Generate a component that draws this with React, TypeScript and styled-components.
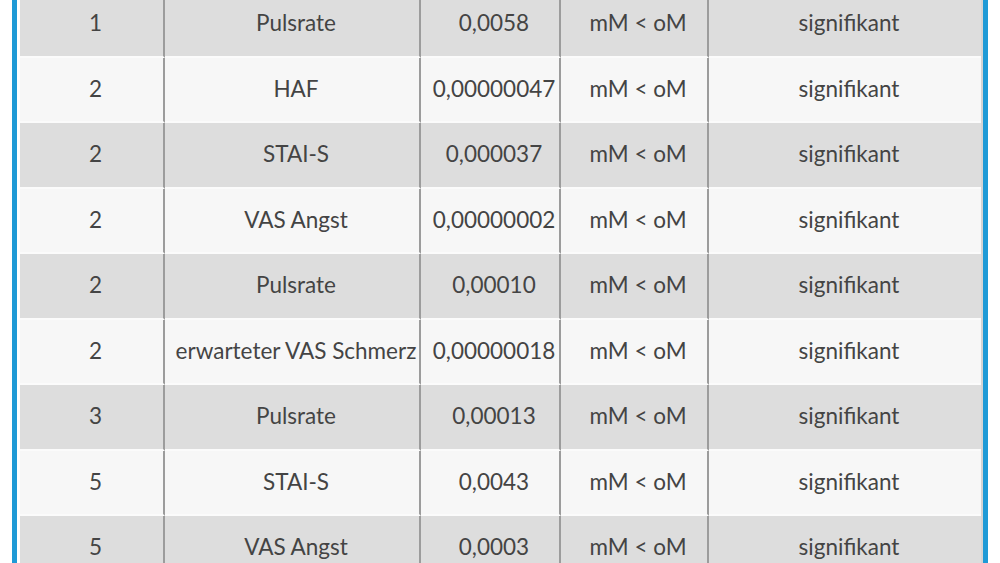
import React from 'react';
import styled, { createGlobalStyle } from 'styled-components';

const GlobalStyle = createGlobalStyle`
  html, body {
    margin: 0;
    padding: 0;
    background: #ffffff;
  }
  body {
    font-family: Lato, "Open Sans", "Liberation Sans", sans-serif;
  }
`;

const Viewport = styled.div`
  width: 1000px;
  height: 563px;
  overflow: hidden;
  background: #ffffff;
`;

const Frame = styled.div`
  margin-left: 12px;
  width: 963px;
  border-left: 5px solid #1f9ad6;
  border-right: 5px solid #1f9ad6;
  padding-left: 3px;
  min-height: 620px;
`;

const Table = styled.table`
  width: 100%;
  margin-top: -8px;
  border-collapse: separate;
  border-spacing: 0;
  table-layout: fixed;
  border-right: 2px solid #d4d4d4;
`;

const Row = styled.tr<{ $shaded: boolean }>`
  height: 65.5px;
  background: ${(p) => (p.$shaded ? '#dddddd' : '#f7f7f7')};
`;

const Cell = styled.td`
  box-sizing: border-box;
  padding: 0 0 2px 8px;
  text-align: center;
  vertical-align: middle;
  white-space: nowrap;
  overflow: visible;
  font-size: 22.5px;
  color: #444444;
  border-bottom: 2px solid #fbfbfb;
  border-right: 2px solid #9c9c9c;

  &:last-child {
    border-right: none;
  }
`;

const rows: [string, string, string][] = [
  ['1', 'Pulsrate', '0,0058'],
  ['2', 'HAF', '0,00000047'],
  ['2', 'STAI-S', '0,000037'],
  ['2', 'VAS Angst', '0,00000002'],
  ['2', 'Pulsrate', '0,00010'],
  ['2', 'erwarteter VAS Schmerz', '0,00000018'],
  ['3', 'Pulsrate', '0,00013'],
  ['5', 'STAI-S', '0,0043'],
  ['5', 'VAS Angst', '0,0003'],
];

const App: React.FC = () => {
  return (
    <>
      <GlobalStyle />
      <Viewport>
        <Frame>
          <Table>
            <colgroup>
              <col style={{ width: 145 }} />
              <col style={{ width: 256 }} />
              <col style={{ width: 140 }} />
              <col style={{ width: 148 }} />
              <col />
            </colgroup>
            <tbody>
              {rows.map(([day, measure, p], i) => (
                <Row key={i} $shaded={i % 2 === 0}>
                  <Cell>{day}</Cell>
                  <Cell>{measure}</Cell>
                  <Cell>{p}</Cell>
                  <Cell>mM &lt; oM</Cell>
                  <Cell>signifikant</Cell>
                </Row>
              ))}
            </tbody>
          </Table>
        </Frame>
      </Viewport>
    </>
  );
};

export default App;
